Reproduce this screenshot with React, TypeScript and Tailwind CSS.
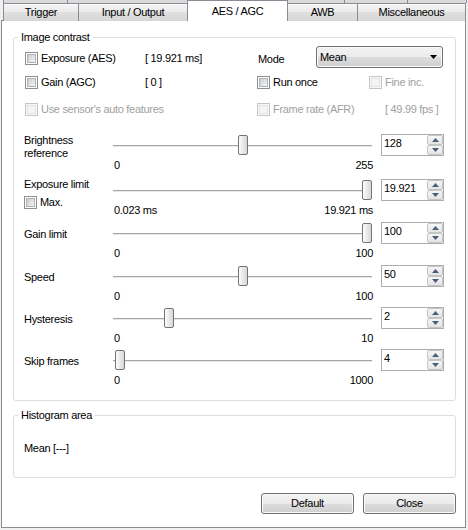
import type { ReactNode } from "react";

function CheckBox({ disabled = false }: { disabled?: boolean }) {
  return (
    <span
      className={`flex h-[13px] w-[13px] shrink-0 items-center justify-center border ${
        disabled ? "border-[#c6c6c6] bg-[#f7f7f7]" : "border-[#8e8f8f] bg-white"
      }`}
    >
      <span
        className={`h-[9px] w-[9px] border ${
          disabled
            ? "border-[#e3e3e3] bg-[#f4f4f4]"
            : "border-[#aeb2b6] bg-[linear-gradient(135deg,#c9ccd1,#f4f4f4)]"
        }`}
      />
    </span>
  );
}

function CheckLabel({ children, disabled = false }: { children: ReactNode; disabled?: boolean }) {
  return (
    <span className="flex items-center gap-[3px]">
      <CheckBox disabled={disabled} />
      <span className={disabled ? "text-[#a0a0a0]" : ""}>{children}</span>
    </span>
  );
}

function Arrow({ up = false }: { up?: boolean }) {
  return (
    <svg width="7" height="4" viewBox="0 0 7 4">
      <polygon points={up ? "3.5,0 7,4 0,4" : "0,0 7,0 3.5,4"} fill="#4d5e7c" />
    </svg>
  );
}

function Spin({ value }: { value: string }) {
  return (
    <div className="ml-[8px] flex h-[22px] w-[63px] border border-[#abadb3] bg-white">
      <span className="flex-1 pl-[2px] pt-[2px]">{value}</span>
      <div className="flex w-[16px] flex-col">
        <span className="flex h-[10px] items-center justify-center rounded-[2px] border border-[#c5c5c5] bg-[linear-gradient(#f6f6f6,#e4e4e4)]">
          <Arrow up />
        </span>
        <span className="flex h-[10px] items-center justify-center rounded-[2px] border border-[#c5c5c5] bg-[linear-gradient(#f6f6f6,#e4e4e4)]">
          <Arrow />
        </span>
      </div>
    </div>
  );
}

type SliderProps = {
  label: ReactNode;
  labelCls: string;
  extra?: ReactNode;
  min: string;
  max: string;
  value: string;
  pct: number;
  cls: string;
};

function SliderRow({ label, labelCls, extra, min, max, value, pct, cls }: SliderProps) {
  return (
    <div className={`flex items-start ${cls}`}>
      <div className={`w-[89px] ${labelCls}`}>
        <div>{label}</div>
        {extra}
      </div>
      <div className="w-[260px]">
        <div className="relative h-[22px]">
          <div className="absolute left-0 right-[1px] top-[11px] h-[2px] border-t border-[#a5a5a5] bg-[#e7e7e7]" />
          <div
            className="absolute top-[1px] h-[20px] w-[10px] rounded-[2px] border border-[#70757a] bg-[linear-gradient(90deg,#fdfdfd,#e9e9e9_50%,#d7d7d7)]"
            style={{ left: 1 + pct * 248 }}
          />
        </div>
        <div className="mt-[3px] flex justify-between pl-[1px]">
          <span>{min}</span>
          <span>{max}</span>
        </div>
      </div>
      <Spin value={value} />
    </div>
  );
}

const BTN =
  "flex h-[21px] w-[93px] items-center justify-center rounded-[3px] border border-[#707070] bg-[linear-gradient(#f2f2f2,#ebebeb_50%,#dddddd_50%,#cfcfcf)] shadow-[inset_0_0_0_1px_#fbfbfb]";

const TAB =
  "flex h-[18px] justify-center border-[#898c95] bg-[linear-gradient(#f4f4f4,#eaeaea_50%,#dfdfdf_50%,#d6d6d6)] pt-[2px] shadow-[inset_0_1px_0_#fdfdfd]";

export default function App() {
  return (
    <div className="h-[530px] w-[468px] overflow-hidden bg-[#f0f0f0] font-['Liberation_Sans',Arial,sans-serif] text-[11px] leading-[13px] tracking-[-0.3px] text-black">
      {/* back row of tabs */}
      <div className="flex h-[3px] pl-[3px]">
        <div className="w-[65px] border-x border-[#898c95] bg-[#dadada]" />
        <div className="w-[120px] border-r border-[#898c95] bg-[#dadada]" />
        <div className="w-[100px] bg-[#dadada]" />
        <div className="w-[57px] border-r border-[#898c95] bg-[#dadada]" />
        <div className="w-[63px] border-r border-[#898c95] bg-[#dadada]" />
        <div className="w-[59px] border-r border-[#898c95] bg-[#dadada]" />
      </div>

      {/* front row of tabs */}
      <div className="flex h-[18px] items-start pl-[3px]">
        <div className={`${TAB} w-[75px] border-l border-t`}>Trigger</div>
        <div className={`${TAB} w-[109px] border-l border-t`}>Input / Output</div>
        <div className="relative z-10 -mt-[3px] flex h-[21px] w-[101px] justify-center border-x border-t border-[#898c95] bg-white pt-[4px]">
          AES / AGC
        </div>
        <div className={`${TAB} w-[69px] border-t`}>AWB</div>
        <div className={`${TAB} w-[109px] border-x border-t`}>Miscellaneous</div>
      </div>

      {/* tab page */}
      <div className="-mt-[1px] ml-[1px] h-[508px] w-[465px] border border-[#898c95] bg-white">
        <fieldset className="ml-[11px] mt-[10px] w-[443px] rounded-[3px] border border-[#d5dfe5] pb-[13px]">
          <legend className="ml-[4px] px-[3px]">Image contrast</legend>
          <div className="pl-[10px] pt-[2px]">
            <div className="flex h-[22px] items-start">
              <div className="ml-[1px] mt-[6px] w-[120px]">
                <CheckLabel>Exposure (AES)</CheckLabel>
              </div>
              <div className="mt-[6px] w-[113px]">[ 19.921 ms]</div>
              <div className="mt-[7px] w-[58px]">Mode</div>
              <div className="flex h-[22px] w-[127px] items-center justify-between rounded-[3px] border border-[#707070] bg-[linear-gradient(#f2f2f2,#ebebeb_50%,#dddddd_50%,#cfcfcf)] pl-[3px] pr-[5px] shadow-[inset_0_0_0_1px_#fbfbfb]">
                <span>Mean</span>
                <svg width="7" height="4" viewBox="0 0 7 4">
                  <polygon points="0,0 7,0 3.5,4" fill="#000" />
                </svg>
              </div>
            </div>

            <div className="mt-[8px] flex items-start">
              <div className="ml-[1px] w-[120px]">
                <CheckLabel>Gain (AGC)</CheckLabel>
              </div>
              <div className="w-[112px]">[ 0 ]</div>
              <div className="w-[112px]">
                <CheckLabel>Run once</CheckLabel>
              </div>
              <CheckLabel disabled>Fine inc.</CheckLabel>
            </div>

            <div className="mt-[14px] flex items-start">
              <div className="ml-[1px] w-[232px]">
                <CheckLabel disabled>Use sensor's auto features</CheckLabel>
              </div>
              <div className="w-[128px]">
                <CheckLabel disabled>Frame rate (AFR)</CheckLabel>
              </div>
              <span className="text-[#a0a0a0]">[ 49.99 fps ]</span>
            </div>

            <SliderRow
              cls="mt-[18px]"
              labelCls=""
              label={
                <>
                  Brightness
                  <br />
                  reference
                </>
              }
              min="0"
              max="255"
              value="128"
              pct={128 / 255}
            />
            <SliderRow
              cls="mt-[7px]"
              labelCls="-mt-[1px]"
              label="Exposure limit"
              extra={
                <div className="mt-[5px]">
                  <CheckLabel>Max.</CheckLabel>
                </div>
              }
              min="0.023 ms"
              max="19.921 ms"
              value="19.921"
              pct={1}
            />
            <SliderRow cls="mt-[5px]" labelCls="mt-[6px]" label="Gain limit" min="0" max="100" value="100" pct={1} />
            <SliderRow cls="mt-[5px]" labelCls="mt-[6px]" label="Speed" min="0" max="100" value="50" pct={0.5} />
            <SliderRow cls="mt-[4px]" labelCls="mt-[6px]" label="Hysteresis" min="0" max="10" value="2" pct={0.2} />
            <SliderRow cls="mt-[4px]" labelCls="mt-[6px]" label="Skip frames" min="0" max="1000" value="4" pct={0.004} />
          </div>
        </fieldset>

        <fieldset className="ml-[11px] mt-[8px] w-[443px] rounded-[3px] border border-[#d5dfe5] pb-[22px]">
          <legend className="ml-[4px] px-[3px]">Histogram area</legend>
          <div className="mt-[20px] pl-[10px]">Mean [---]</div>
        </fieldset>

        <div className="ml-[11px] mt-[15px] flex w-[443px] justify-end gap-[9px]">
          <button className={BTN}>Default</button>
          <button className={BTN}>Close</button>
        </div>
      </div>
    </div>
  );
}
